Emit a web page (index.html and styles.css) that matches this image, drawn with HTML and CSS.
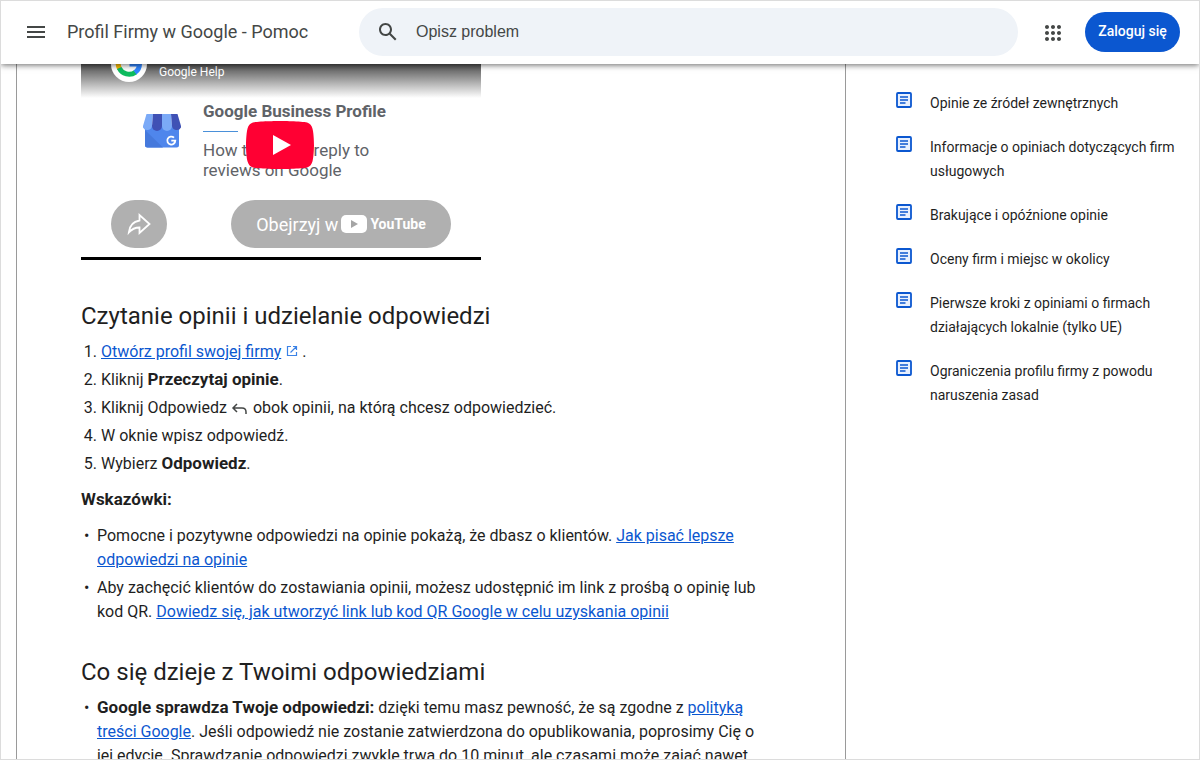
FILE: index.html
```
<!doctype html>
<html lang="pl">

<head>
    <meta charset="UTF-8" />
    <meta name="viewport" content="width=device-width, initial-scale=1.0" />
    <title>Profil Firmy w Google - Pomoc</title>
    <link rel="stylesheet" href="styles.css">
</head>

<body>

    <header class="topbar">
        <button class="icon-button menu" aria-label="Menu główne">
            <svg width="24" height="24" viewBox="0 0 24 24"><path d="M3 18h18v-2H3v2zm0-5h18v-2H3v2zm0-7v2h18V6H3z" fill="#444746"/></svg>
        </button>
        <a class="product" href="#">Profil Firmy w Google - Pomoc</a>
        <form class="search">
            <button class="icon-button" type="button" aria-label="Szukaj">
                <svg width="24" height="24" viewBox="0 0 24 24"><path d="M20.49 19l-5.73-5.73C15.53 12.2 16 10.91 16 9.5 16 5.91 13.09 3 9.5 3S3 5.91 3 9.5 5.91 16 9.5 16c1.41 0 2.7-.47 3.77-1.24L19 20.49 20.49 19zM5 9.5C5 7.01 7.01 5 9.5 5S14 7.01 14 9.5 11.99 14 9.5 14 5 11.99 5 9.5z" fill="#444746"/></svg>
            </button>
            <input type="text" placeholder="Opisz problem" aria-label="Opisz problem">
        </form>
        <button class="icon-button apps" aria-label="Aplikacje Google">
            <svg width="24" height="24" viewBox="0 0 24 24"><path d="M6 8c1.1 0 2-.9 2-2s-.9-2-2-2-2 .9-2 2 .9 2 2 2zm6 12c1.1 0 2-.9 2-2s-.9-2-2-2-2 .9-2 2 .9 2 2 2zm-6 0c1.1 0 2-.9 2-2s-.9-2-2-2-2 .9-2 2 .9 2 2 2zm0-6c1.1 0 2-.9 2-2s-.9-2-2-2-2 .9-2 2 .9 2 2 2zm6 0c1.1 0 2-.9 2-2s-.9-2-2-2-2 .9-2 2 .9 2 2 2zm4-8c0 1.1.9 2 2 2s2-.9 2-2-.9-2-2-2-2 .9-2 2zm-4 2c1.1 0 2-.9 2-2s-.9-2-2-2-2 .9-2 2 .9 2 2 2zm6 6c1.1 0 2-.9 2-2s-.9-2-2-2-2 .9-2 2 .9 2 2 2zm0 6c1.1 0 2-.9 2-2s-.9-2-2-2-2 .9-2 2 .9 2 2 2z" fill="#444746"/></svg>
        </button>
        <a class="login" href="#">Zaloguj się</a>
    </header>

    <div class="page">
        <main class="article">
            <div class="video">
                <div class="video-top">
                    <svg class="avatar" width="36" height="36" viewBox="0 0 36 36">
                        <circle cx="18" cy="18" r="18" fill="#fff"/>
                        <g fill="none" stroke-width="5">
                            <path d="M26 10.500A11 11 0 0 0 9 11.800" stroke="#ea4335"/>
                            <path d="M9 11.500A11 11 0 0 0 8.500 22.500" stroke="#fbbc04"/>
                            <path d="M8.200 22A11 11 0 0 0 24.500 26.200" stroke="#0ebc5f"/>
                            <path d="M18.500 18H28.500A10.500 10.500 0 0 1 24 26.500" stroke="#3186ff"/>
                        </g>
                    </svg>
                    <span class="channel">Google Help</span>
                </div>
                <div class="slide">
                    <svg class="store" width="40" height="36" viewBox="0 0 40 36">
                        <path d="M3 12h34v20a2.500 2.500 0 0 1-2.500 2.500h-29A2.500 2.500 0 0 1 3 32z" fill="#4f86ec"/>
                        <path d="M3 17l18 17.500H5.500A2.500 2.500 0 0 1 3 32z" fill="#4579dc"/>
                        <path d="M4.500 1H11L10 13a4.800 4.800 0 0 1-9 1.500V13z" fill="#7baaf7"/>
                        <path d="M11 1h9v12a5 5 0 0 1-10 0z" fill="#3f51b5"/>
                        <path d="M20 1h9l1 12a5 5 0 0 1-10 0z" fill="#7baaf7"/>
                        <path d="M29 1h6.500L39 13v1.500a4.800 4.800 0 0 1-9-1.500z" fill="#3f51b5"/>
                        <path d="M32 24.600a4 4 0 1 0 1.300 3h-4" fill="none" stroke="#fff" stroke-width="1.800"/>
                    </svg>
                    <div class="slide-text">
                        <strong>Google Business Profile</strong>
                        <hr>
                        <p>How to read &amp; reply to<br>reviews on Google</p>
                    </div>
                    <button class="play" aria-label="Odtwórz">
                        <svg width="68" height="48" viewBox="0 0 68 48"><path d="M66.520 7.740c-.78-2.930-2.490-5.410-5.420-6.190C55.790.13 34 0 34 0S12.210.13 6.900 1.550c-2.930.78-4.630 3.260-5.420 6.190C.06 13.050 0 24 0 24s.06 10.950 1.480 16.260c.78 2.930 2.490 5.410 5.420 6.190C12.210 47.870 34 48 34 48s21.790-.13 27.100-1.550c2.930-.78 4.640-3.260 5.420-6.190C67.940 34.950 68 24 68 24s-.06-10.950-1.480-16.260z" fill="#f03"/><path d="M45 24 27 14v20" fill="#fff"/></svg>
                    </button>
                </div>
                <div class="video-bottom">
                    <button class="pill share" aria-label="Udostępnij">
                        <svg width="24" height="24" viewBox="0 0 24 24"><path d="M12.500 3v5.500C6 9.500 2.500 14 1.800 20.500c3-3.500 6-5 10.700-5V21l10-9z" fill="none" stroke="#fff" stroke-width="1.800"/></svg>
                    </button>
                    <a class="pill watch" href="#">
                        <span>Obejrzyj w</span>
                        <svg width="26" height="20" viewBox="0 0 26 20"><rect y="1" width="26" height="18" rx="5" fill="#fff"/><path d="M10 6v8l7-4z" fill="#a5a5a5"/></svg>
                        <b>YouTube</b>
                    </a>
                </div>
            </div>

            <h2>Czytanie opinii i udzielanie odpowiedzi</h2>
            <ol>
                <li><a href="#">Otwórz profil swojej firmy</a><svg class="external" width="12" height="12" viewBox="0 0 12 12"><path d="M5 1.500H1.500v9h9V7M7 1.500h3.500V5M10.500 1.500l-6 6" fill="none" stroke="#3b82e6" stroke-width="1.200"/></svg>.</li>
                <li>Kliknij <b>Przeczytaj opinie</b>.</li>
                <li>Kliknij Odpowiedz <svg class="reply" width="18" height="16" viewBox="0 0 18 16"><path d="M6 3L2 7l4 4M2.500 7H11q4 0 4 4v2" fill="none" stroke="#444746" stroke-width="1.500"/></svg> obok opinii, na którą chcesz odpowiedzieć.</li>
                <li>W oknie wpisz odpowiedź.</li>
                <li>Wybierz <b>Odpowiedz</b>.</li>
            </ol>
            <p class="tips"><b>Wskazówki:</b></p>
            <ul>
                <li>Pomocne i pozytywne odpowiedzi na opinie pokażą, że dbasz o klientów. <a href="#">Jak pisać lepsze<br>odpowiedzi na opinie</a></li>
                <li>Aby zachęcić klientów do zostawiania opinii, możesz udostępnić im link z prośbą o opinię lub<br>kod QR. <a href="#">Dowiedz się, jak utworzyć link lub kod QR Google w celu uzyskania opinii</a></li>
            </ul>

            <h2>Co się dzieje z Twoimi odpowiedziami</h2>
            <ul>
                <li><b>Google sprawdza Twoje odpowiedzi:</b> dzięki temu masz pewność, że są zgodne z <a href="#">polityką<br>treści Google</a>. Jeśli odpowiedź nie zostanie zatwierdzona do opublikowania, poprosimy Cię o<br>jej edycję. Sprawdzanie odpowiedzi zwykle trwa do 10 minut, ale czasami może zająć nawet</li>
            </ul>
        </main>

        <nav class="related">
            <svg class="sprite" width="0" height="0"><symbol id="doc" viewBox="0 0 16 16"><rect x="1" y="1" width="14" height="14" rx="1" fill="#e8f0fe" stroke="#0b57d0" stroke-width="1.800"/><path d="M4 5h8M4 8h8M4 11h5.500" stroke="#0b57d0" stroke-width="1.500"/></symbol></svg>
            <a href="#"><svg><use href="#doc"/></svg><span>Opinie ze źródeł zewnętrznych</span></a>
            <a href="#"><svg><use href="#doc"/></svg><span>Informacje o opiniach dotyczących firm usługowych</span></a>
            <a href="#"><svg><use href="#doc"/></svg><span>Brakujące i opóźnione opinie</span></a>
            <a href="#"><svg><use href="#doc"/></svg><span>Oceny firm i miejsc w okolicy</span></a>
            <a href="#"><svg><use href="#doc"/></svg><span>Pierwsze kroki z opiniami o firmach działających lokalnie (tylko UE)</span></a>
            <a href="#"><svg><use href="#doc"/></svg><span>Ograniczenia profilu firmy z powodu naruszenia zasad</span></a>
        </nav>
    </div>

</body>

</html>
```
FILE: styles.css
```
* {
    box-sizing: border-box;
}

body {
    margin: 0;
    height: 100vh;
    display: flex;
    flex-direction: column;
    overflow: hidden;
    border: 1px solid #dcdcdc;
    background: #fff;
    color: #1f1f1f;
    font-family: Roboto, "Liberation Sans", sans-serif;
    font-size: 16px;
    line-height: 24px;
}

button {
    border: none;
    background: none;
    padding: 0;
    cursor: pointer;
}

svg {
    display: block;
    flex: none;
}

a {
    color: #0b57d0;
}

/* header */

.topbar {
    display: flex;
    align-items: center;
    flex: none;
    height: 63px;
    padding: 0 19px 1px 23px;
    background: #fff;
    box-shadow: 0 1px 6px rgba(0, 0, 0, 0.6);
    z-index: 1;
}

.product {
    flex: none;
    width: 311px;
    padding-left: 19px;
    color: #444746;
    font-size: 18px;
    text-decoration: none;
    white-space: nowrap;
}

.search {
    display: flex;
    align-items: center;
    flex: 1;
    height: 48px;
    padding: 0 17px;
    gap: 16px;
    border-radius: 24px;
    background: #eff3f8;
}

.search input {
    flex: 1;
    border: none;
    outline: none;
    padding: 0;
    background: none;
    color: #444746;
    font: 16px "Liberation Sans", Arial, sans-serif;
}

.search input::placeholder {
    color: #444746;
    opacity: 1;
}

.apps {
    margin: 2px 20px 0 23px;
}

.login {
    width: 95px;
    height: 40px;
    border-radius: 20px;
    background: #0b57d0;
    color: #fff;
    font-size: 14px;
    font-weight: 500;
    line-height: 38px;
    text-align: center;
    text-decoration: none;
    white-space: nowrap;
}

/* article */

.page {
    display: flex;
    flex: 1;
    min-height: 0;
    overflow: hidden;
    padding-left: 15px;
}

.article {
    flex: 1;
    min-width: 0;
    height: 100%;
    overflow: hidden;
    padding: 0 64px;
    border: solid #9a9a9a;
    border-width: 0 1px;
}

h2 {
    margin: 40px 0 8px;
    font-size: 24px;
    font-weight: 400;
    line-height: 32px;
}

ol,
ul {
    margin: 0;
    padding-left: 20px;
}

ul {
    padding-left: 16px;
    list-style: none;
}

ul li::before {
    content: "•";
    display: inline-block;
    width: 13px;
    margin-left: -13px;
    line-height: 16px;
}

ul + h2 {
    margin-top: 32px;
}

li {
    white-space: nowrap;
}

li + li {
    margin-top: 4px;
}

li b,
.tips b {
    font-size: 17px;
    line-height: 16px;
}

.tips {
    margin: 12px 0;
}

.external,
.reply {
    display: inline-block;
}

.external {
    margin: 0 4px 0 5px;
}

.reply {
    vertical-align: -4px;
}

/* video */

.video {
    width: 400px;
    border-bottom: 3px solid #000;
}

.video-top {
    position: relative;
    height: 34px;
    background: linear-gradient(#505050, #8c8c8c 35%, #c8c8c8 68%, #fff);
}

.avatar {
    position: absolute;
    left: 30px;
    top: -18px;
}

.channel {
    position: absolute;
    left: 78px;
    top: 0;
    color: #fff;
    font: 12px/16px Roboto, sans-serif;
}

.slide {
    position: relative;
    display: flex;
    gap: 21px;
    height: 102px;
    padding: 2px 0 0 61px;
    color: #5f6368;
    font-size: 17px;
}

.store {
    margin-top: 13px;
}

.slide-text strong {
    display: block;
    line-height: 22px;
}

.slide-text hr {
    width: 35px;
    margin: 9px 0 8px;
    border: none;
    border-top: 1px solid #4a90d9;
}

.slide-text p {
    margin: 0;
    line-height: 20px;
}

.play {
    position: absolute;
    left: 165px;
    top: 23px;
}

.video-bottom {
    display: flex;
    justify-content: space-between;
    padding: 0 30px 9px;
}

.pill {
    display: flex;
    align-items: center;
    justify-content: center;
    height: 48px;
    border-radius: 24px;
    background: #b0b0b0;
    color: #fff;
    text-decoration: none;
}

.share {
    width: 56px;
}

.watch {
    width: 220px;
    gap: 3px;
    font: 18px Roboto, sans-serif;
}

.watch b {
    font-size: 14px;
}

/* sidebar */

.related {
    display: flex;
    flex-direction: column;
    flex: none;
    gap: 20px;
    width: 353px;
    padding: 27px 16px 0 50px;
}

.related a {
    display: flex;
    gap: 18px;
    color: #1f1f1f;
    font-size: 14px;
    text-decoration: none;
}

.related a svg {
    width: 16px;
    height: 16px;
    margin-top: 1px;
}

.sprite {
    display: none;
}
```
